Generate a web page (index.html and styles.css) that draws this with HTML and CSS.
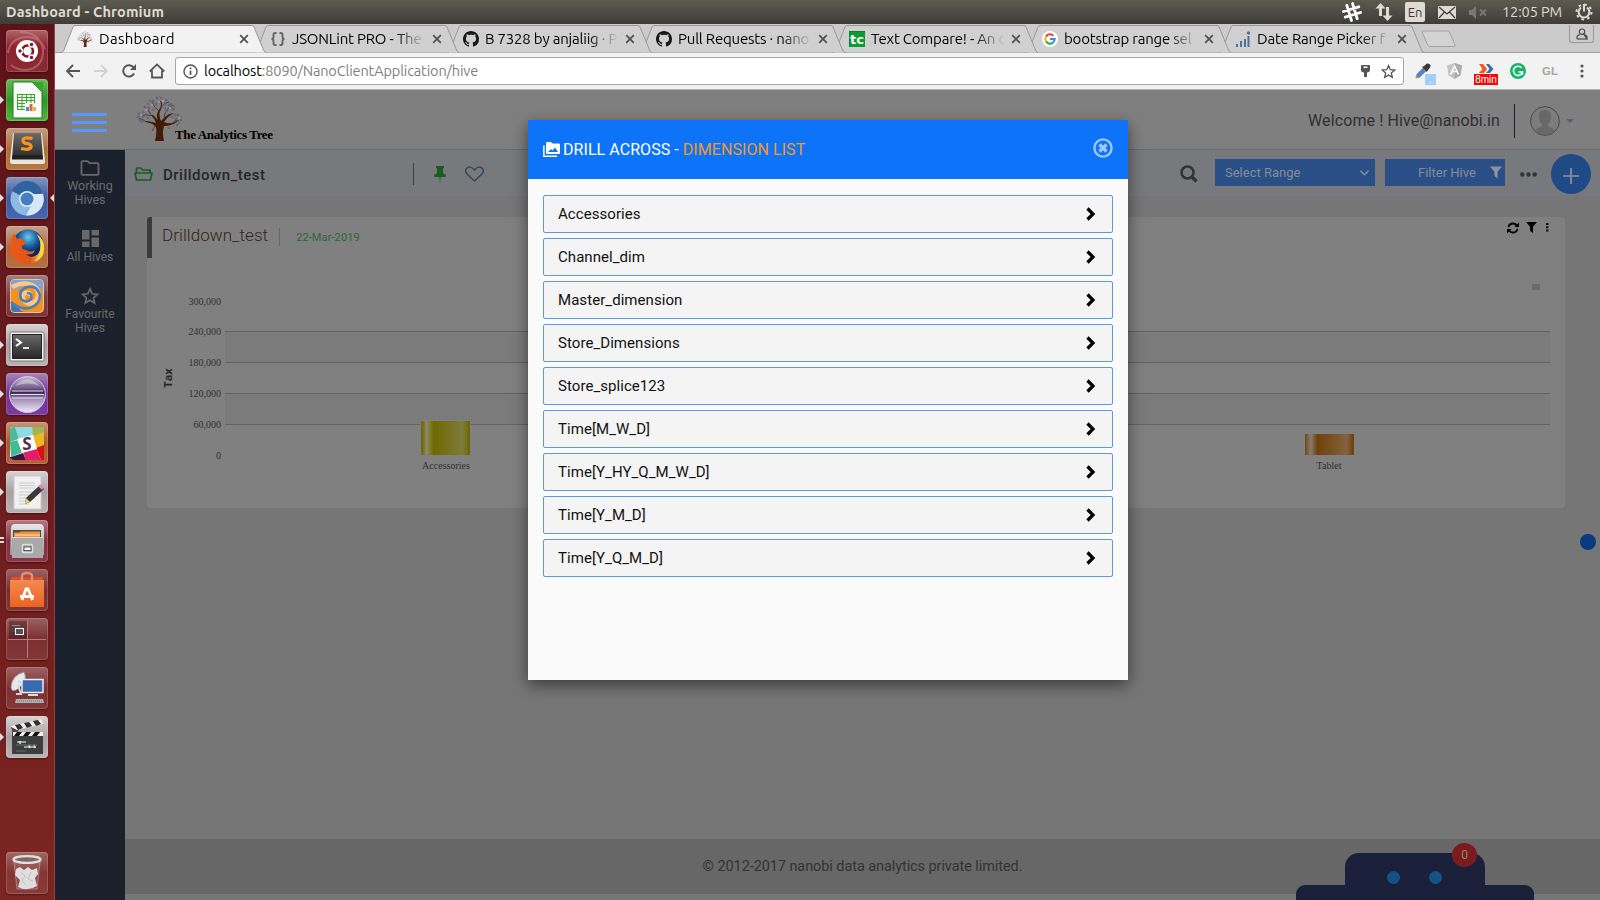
FILE: index.html
```html
<!DOCTYPE html>
<html lang="en">
<head>
<meta charset="utf-8">
<title>Dashboard</title>
<link rel="stylesheet" href="styles.css">
</head>
<body>
<svg class="defs" width="0" height="0">
  <defs>
    <linearGradient id="yellowBar"><stop offset="0" stop-color="#6c6700"/><stop offset=".05" stop-color="#77731c"/><stop offset=".11" stop-color="#8b8a70"/><stop offset=".17" stop-color="#827e35"/><stop offset=".27" stop-color="#6f6900"/><stop offset=".85" stop-color="#7f7b3c"/><stop offset="1" stop-color="#6a6500"/></linearGradient>
    <linearGradient id="orangeBar"><stop offset="0" stop-color="#70460f"/><stop offset=".05" stop-color="#7c5e3a"/><stop offset=".12" stop-color="#857b6f"/><stop offset=".25" stop-color="#6e420a"/><stop offset=".85" stop-color="#83623e"/><stop offset="1" stop-color="#693f09"/></linearGradient>
    <linearGradient id="metal" x1="0" y1="0" x2="0" y2="1"><stop offset="0" stop-color="#e8e8e8"/><stop offset="1" stop-color="#9c9c9c"/></linearGradient>
    <linearGradient id="dark" x1="0" y1="0" x2="0" y2="1"><stop offset="0" stop-color="#6a6a6a"/><stop offset="1" stop-color="#272727"/></linearGradient>
    <linearGradient id="bag" x1="0" y1="0" x2="0" y2="1"><stop offset="0" stop-color="#f08b50"/><stop offset=".5" stop-color="#f0763a"/><stop offset="1" stop-color="#e9631f"/></linearGradient>
    <radialGradient id="globe" cx=".5" cy=".25"><stop offset="0" stop-color="#6cc8ee"/><stop offset=".6" stop-color="#175f9f"/><stop offset="1" stop-color="#0b2a5c"/></radialGradient>
    <linearGradient id="fox" x1="0" y1="0" x2="1" y2="0"><stop offset="0" stop-color="#ea5a1b"/><stop offset=".6" stop-color="#e3541c"/><stop offset="1" stop-color="#fcd53a"/></linearGradient>
    <linearGradient id="ecl" x1="0" y1="0" x2="0" y2="1"><stop offset="0" stop-color="#cdbcdc"/><stop offset=".3" stop-color="#7b6592"/><stop offset=".45" stop-color="#3c2852"/><stop offset=".6" stop-color="#9c86b3"/><stop offset="1" stop-color="#f2ebf8"/></linearGradient>
    <symbol id="tab" viewBox="0 0 207 29"><path d="M0 28.5H1.5C3 28.5 3.500 27 4 26L13 3Q14 1.500 15 1.500H192Q193.500 1.500 194 3L203.500 26Q204.500 28.500 206 28.500"/></symbol>
    <symbol id="x" viewBox="0 0 10 10"><path d="M1.200 1.200L8.800 8.800M8.800 1.200L1.200 8.800" stroke="#505050" stroke-width="1.700"/></symbol>
    <symbol id="github" viewBox="0 0 16 16"><path fill="#191717" d="M8 0C3.580 0 0 3.580 0 8c0 3.540 2.290 6.530 5.470 7.590.4.070.55-.17.55-.38 0-.19-.01-.82-.01-1.490-2.010.37-2.530-.49-2.690-.94-.09-.23-.48-.94-.82-1.130-.28-.15-.68-.52-.01-.53.63-.01 1.080.58 1.230.82.72 1.210 1.870.87 2.330.66.07-.52.28-.87.51-1.070-1.780-.2-3.640-.89-3.640-3.950 0-.87.31-1.590.82-2.150-.08-.2-.36-1.020.08-2.120 0 0 .67-.21 2.200.82.64-.18 1.320-.27 2-.27s1.360.09 2 .27c1.530-1.040 2.200-.82 2.200-.82.44 1.100.16 1.920.08 2.120.51.56.82 1.270.82 2.150 0 3.070-1.870 3.750-3.650 3.950.29.25.54.73.54 1.480 0 1.070-.01 1.930-.01 2.200 0 .21.15.46.55.38A8.010 8.010 0 0 0 16 8c0-4.420-3.580-8-8-8z"/></symbol>
    <symbol id="chev" viewBox="0 0 10 14"><path d="M1.500 1.500L7 7L1.500 12.500" fill="none" stroke="#000" stroke-width="3.200"/></symbol>
    <symbol id="funnel" viewBox="0 0 12 12"><path d="M0 0H12L7.600 5.200V12L4.400 9.500V5.200Z"/></symbol>
    <symbol id="tree" viewBox="0 0 46 46">
      <path fill="#3f1b08" d="M19 46Q21 37 20 32Q17 28 9 27L10 26Q17 27 20 28Q19 24 15 20L17 20Q21 24 22 25Q19 20 24 13Q26 10 24 6L25 6Q27 10 25 14Q22 19 25 26Q28 22 33 19L38 18Q32 21 28 27Q34 30 41 26L41 27Q35 31 28 31Q26 38 28 46Z"/>
      <g fill="none" stroke="#56321f" stroke-width=".9"><path d="M15 21Q10 18 6 21M23 16Q18 12 16 7M28 22Q30 13 37 10M25 12Q28 8 33 7M16 21L12 15M9 26L3 23M36 29Q39 24 43 26M19 31L16 36"/></g>
      <g fill="#5f5a86" fill-opacity=".8"><circle cx="3" cy="19" r="1.500"/><circle cx="9" cy="12" r="1.500"/><circle cx="17" cy="6" r="1.600"/><circle cx="30" cy="5" r="1.500"/><circle cx="42" cy="20" r="1.500"/><circle cx="45" cy="25" r="1.200"/><circle cx="4" cy="25" r="1.500"/><circle cx="37" cy="14" r="1.600"/><circle cx="13" cy="13" r="1.500"/><circle cx="21" cy="3" r="1.500"/><circle cx="33" cy="10" r="1.300"/><circle cx="10" cy="20" r="1.400"/><circle cx="40" cy="24" r="1.500"/></g>
      <g fill="#8a5668" fill-opacity=".8"><circle cx="20" cy="9" r="1.600"/><circle cx="35" cy="9" r="1.500"/><circle cx="7" cy="17" r="1.400"/><circle cx="39" cy="20" r="1.500"/><circle cx="25" cy="3" r="1.400"/><circle cx="7" cy="22" r="1.400"/><circle cx="33" cy="33" r="1.200"/><circle cx="12" cy="9" r="1.300"/><circle cx="29" cy="13" r="1.300"/><circle cx="17" cy="15" r="1.300"/><circle cx="43" cy="28" r="1.200"/><circle cx="17" cy="34" r="1.200"/></g>
      <g fill="#477377" fill-opacity=".8"><circle cx="14" cy="6" r="1.400"/><circle cx="29" cy="9" r="1.500"/><circle cx="2" cy="22" r="1.500"/><circle cx="41" cy="30" r="1.300"/><circle cx="19" cy="13" r="1.300"/><circle cx="38" cy="11" r="1.300"/><circle cx="31" cy="16" r="1.300"/><circle cx="12" cy="23" r="1.300"/><circle cx="36" cy="22" r="1.400"/><circle cx="6" cy="27" r="1.200"/></g>
      <g fill="#a39aa2" fill-opacity=".8"><circle cx="16" cy="10" r="1.300"/><circle cx="27" cy="6" r="1.300"/><circle cx="34" cy="13" r="1.200"/><circle cx="5" cy="20" r="1.200"/><circle cx="43" cy="23" r="1.200"/><circle cx="23" cy="7" r="1.200"/><circle cx="10" cy="15" r="1.200"/></g>
    </symbol>
  </defs>
</svg>

<div class="desktop">
  <header class="panel">
    <span class="panel-title">Dashboard - Chromium</span>
    <div class="indicators">
      <svg width="20" height="20" viewBox="0 0 20 20"><g transform="rotate(-17 10 10)" stroke="#fff" stroke-width="2.800" stroke-linecap="round"><path d="M7 2V18M13 2V18M2 7H18M2 13H18"/></g></svg>
      <svg width="18" height="18" viewBox="0 0 18 18" fill="#dfdbd2"><path d="M5.500 0L10.500 5.500H7V13H4V5.500H.5ZM12.500 18L7.500 12.500H11V4H14V12.500H17.500Z"/></svg>
      <span class="kbd">En</span>
      <svg width="18" height="13" viewBox="0 0 18 13"><rect width="18" height="13" rx="1" fill="#dfdbd2"/><path d="M1 1L9 8L17 1M1 12L6.500 6M17 12L11.500 6" fill="none" stroke="#3c3b37" stroke-width="1.200"/></svg>
      <svg width="18" height="13" viewBox="0 0 18 13"><path d="M0 4H3L7 0V13L3 9H0Z" fill="#7a7871"/><path d="M11 3.500L17 9.500M17 3.500L11 9.500" stroke="#7a7871" stroke-width="1.800"/></svg>
      <span class="clock">12:05 PM</span>
      <svg width="18" height="18" viewBox="0 0 18 18" fill="none" stroke="#dfdbd2"><circle cx="9" cy="9" r="7.500" stroke-width="2" stroke-dasharray="2.500 3.390"/><path d="M6 4.600A5.400 5.400 0 1 0 12 4.600" stroke-width="2"/><path d="M9 1V8.500" stroke-width="2"/></svg>
    </div>
  </header>

  <div class="below">
    <nav class="launcher">
      <div class="app ubuntu"><svg viewBox="0 0 42 42"><path d="M2 23Q4 8 21 7Q34 7 39 19M5 35Q13 42 25 39Q38 35 37 18M14 2Q34 2 37 20" fill="none" stroke="#d59297" stroke-opacity=".45" stroke-width="2"/><circle cx="21" cy="21" r="11" fill="#fff"/><circle cx="21.500" cy="21" r="5.500" fill="none" stroke="#7a1a24" stroke-width="2.600"/><g stroke="#fff" stroke-width="1.500"><circle cx="14" cy="21" r="2.500" fill="#7a1a24"/><circle cx="25.500" cy="14.500" r="2.500" fill="#7a1a24"/><circle cx="25.500" cy="27.500" r="2.500" fill="#7a1a24"/></g></svg></div>
      <div class="app calc run"><svg viewBox="0 0 42 42"><path d="M7 3H26L36 13V39H7Z" fill="#f8fbf7" stroke="#1c7a17"/><path d="M26 3H37V14Z" fill="#36a72a"/><g fill="none" stroke="#3aa62f" stroke-width="1"><rect x="11.500" y="15.500" width="17" height="15"/><path d="M11 18.500H29M11 21.500H29M11 24.500H29M11 27.500H29M16 15V31M20.500 15V31M25 15V31"/></g><path fill="#fff" d="M19 24H31V32H19Z"/><path fill="#4a90d0" d="M20 28H23V32H20Z"/><path fill="#e4692d" d="M23.500 25H26.500V32H23.500Z"/><path fill="#e9b34c" d="M27 28H30V32H27Z"/></svg></div>
      <div class="app sublime run"><svg viewBox="0 0 42 42"><path d="M7 5H36L39 33Q39 36 37 36H6Q4 36 4 33Z" fill="#e9e6e1"/><path d="M8 5H35L37 31H6Z" fill="url(#dark)"/><path d="M7 27H36L37 31.500H6Z" fill="#202020"/><path d="M26.500 10.500Q17 8.500 17 12.500Q17 15 21.500 15.700Q26 16.500 25 19.500Q23 22.500 15 20.500" fill="none" stroke="#f59323" stroke-width="3.200"/></svg></div>
      <div class="app chromium run focus"><svg viewBox="0 0 42 42"><circle cx="21" cy="22" r="16.500" fill="#8db9e2"/><path d="M21 22L6 14A16.500 16.500 0 0 1 37 16Z" fill="#2e639f"/><path d="M26 17H37A16.500 16.500 0 0 1 20 38.500L27 25Z" fill="#d6e7f6"/><circle cx="21" cy="22" r="8" fill="#e2effa"/><circle cx="21" cy="22" r="6.500" fill="#437fc1"/></svg></div>
      <div class="app firefox run"><svg viewBox="0 0 42 42"><circle cx="22" cy="19" r="15.500" fill="url(#globe)"/><path d="M8 7L11 13Q15 11 18 14L20 17L16 20Q15 23 20 24Q25 27 29 24Q27 30 20 28Q25 34 32 28Q36 23 34 13L31 9Q39 13 38 24Q36 35 25 38Q11 40 5 28Q2 18 8 7Z" fill="url(#fox)"/><path d="M31 8Q41 16 37 29Q33 35 29 35Q36 27 34 15Z" fill="#fbd446"/></svg></div>
      <div class="app swirl"><svg viewBox="0 0 42 42"><rect x="4.500" y="4.500" width="33" height="33" rx="4" fill="#f7921e" stroke="#eac99c"/><path d="M8 5H34Q37 5 37 9V20Q35 10 25 9Q14 9 12 18Q13 11 5 15V8Q5 5 8 5Z" fill="#79a5d8"/><path d="M5 27Q13 31 14 35Q16 37 22 37H8Q5 37 5 33Z" fill="#3f76b5"/><g fill="none"><path d="M6 12Q17 6 26 10Q35 15 31 24Q27 31 19 27Q14 22 19 18Q24 16 24 21" stroke="#fbc98b" stroke-width="4.500"/><path d="M5 27Q14 35 24 33Q34 30 34 20Q31 10 21 12Q12 15 15 24Q20 29 25 24Q27 18 21 18" stroke="#4c80bd" stroke-width="2.600"/></g></svg></div>
      <div class="app term run"><svg viewBox="0 0 42 42"><rect x="4" y="8" width="34" height="29" rx="1.500" fill="#f2f2f2" stroke="#777"/><rect x="6.500" y="10.500" width="29" height="24" fill="url(#dark)" stroke="#222"/><path d="M10 15L15 18.500L10 22" fill="none" stroke="#fff" stroke-width="2"/><path d="M17 24H23" stroke="#fff" stroke-width="1.700"/></svg></div>
      <div class="app eclipse run"><svg viewBox="0 0 42 42"><circle cx="21.500" cy="21.500" r="18" fill="url(#ecl)" stroke="#d6c6e2"/><path d="M6 18H37M5 21.500H38M6 25H37" stroke="#e6dcee" stroke-width="1.100"/><path d="M9 13Q21 0 34 13Q22 8 9 13Z" fill="#fff" opacity=".35"/></svg></div>
      <div class="app slack run"><svg viewBox="0 0 42 42"><rect x="4" y="5" width="34" height="33" rx="3" fill="#fff"/><path d="M4 8Q4 5 8 5H9L16 16L4 20Z" fill="#4dbb9b"/><path d="M9 5H26L28 13L13 18Z" fill="#8edbe4"/><path d="M26 5H38V12L27 14Z" fill="#a3b452"/><path d="M27 14L38 10V24L30 27Z" fill="#edb625"/><path d="M4 20L12 18L17 30L5 35Z" fill="#42bc96"/><path d="M17 30L30 26L35 38H20Z" fill="#e41c69"/><path d="M30 26L38 23V38H35Z" fill="#d51017"/><path d="M5 35L17 31L20 38H8Q4 38 4 35Z" fill="#421047"/><path d="M11 17L27 13L31 27L16 31Z" fill="#fff"/><text x="21" y="28" class="slack-s">S</text></svg></div>
      <div class="app edit run"><svg viewBox="0 0 42 42"><path d="M8 5H35V38H8Z" fill="#f1f1f1" stroke="#ccc"/><path d="M13 12H29M13 14.500H29M13 17H29M13 21H29M13 24H25M13 27H29M13 30H25M13 33H23" stroke="#c1c1c1" stroke-width=".8"/><path d="M34 14L38 18L24 31L19 33L20 27Z" fill="#393939"/><path d="M32 15L35 13L38 16L36 19Z" fill="#df8bc4"/><path d="M20 27L24 31L19 33Z" fill="#e5d067"/></svg></div>
      <div class="app files"><svg viewBox="0 0 42 42"><path d="M5 9Q5 4 9 4H34Q38 4 38 9V35H4Z" fill="url(#metal)"/><path d="M7 10H35V20H7Z" fill="#504b46"/><path d="M8 12.500H13L15 11.500H34V18H8Z" fill="#f2913d"/><path d="M9 15H34" stroke="#ffe3be"/><path d="M6 17H37V38H6Z" fill="#a9a9a9"/><path d="M6 17.500H37" stroke="#d8d8d8"/><rect x="16.500" y="24.500" width="10" height="8" rx="1" fill="none" stroke="#ddd" stroke-width="1.500"/><rect x="18" y="27" width="7" height="3.500" fill="#fff" stroke="#555"/></svg><i></i><b></b></div>
      <div class="app store"><svg viewBox="0 0 42 42"><path d="M5 8H37V13H5Z" fill="#d9512b"/><path d="M4 11H38V38H4Z" fill="url(#bag)"/><path d="M16 13V7Q16 4 21 4Q26 4 26 7V13" fill="none" stroke="#f0866a" stroke-width="2.500"/><path d="M16 31L20 20H22L26.500 31M14 27.500H28" fill="none" stroke="#fff" stroke-width="2.800"/></svg></div>
      <div class="app spaces"><svg viewBox="0 0 42 42"><path d="M3 3H21V21H3Z" fill="#351016" opacity=".4"/><path d="M21.500 2V40M2 21.500H40" stroke="#b77d81"/><path d="M6 7H14V9H6Z" fill="#97858a"/><rect x="6" y="8" width="9" height="6" fill="#574247"/><rect x="9.500" y="10.500" width="8" height="6" fill="#604b50" stroke="#fff"/></svg></div>
      <div class="app remote"><svg viewBox="0 0 42 42"><path d="M5 20Q6 8 18 5Q22 12 14 20Q9 25 6 23Z" fill="#e6e9e8" stroke="#99a"/><path d="M12 18L15 27H10M12 14L18 18" fill="none" stroke="#d3d3d3" stroke-width="2"/><rect x="16" y="12.500" width="21" height="13" fill="#376bb2" stroke="#e8edf2" stroke-width="1.500"/><path d="M22 28H32" stroke="#ddd" stroke-width="2"/><path d="M10 32H37L38 36H9Z" fill="#aeb6b3"/><path d="M11 34H36" stroke="#666" stroke-dasharray="1 1"/></svg></div>
      <div class="app clapper run"><svg viewBox="0 0 42 42"><path d="M5 10L36 3L37 8L7 15Z" fill="#eee"/><path d="M9 9L14 8L17 12L12 14ZM18 7L23 6L26 10L21 12ZM27 5L32 4L35 8L30 10Z" fill="#2f2f2f"/><path d="M5 11L13 15L7 18Z" fill="#444"/><path d="M6 16H37V38H6Z" fill="#3d3f3f"/><path d="M7 16H37V20H7Z" fill="#f1f1f1"/><path d="M11 16H16L13 20H8ZM20 16H25L22 20H17ZM29 16H34L31 20H26Z" fill="#111"/><path d="M11 26H20M14 25V28M18 31H30M23 29L24 32M28 29L29 32" stroke="#fff" stroke-width="1.200"/><path d="M10 35H20M10 29H31" stroke="#777" stroke-width=".8"/></svg></div>
      <div class="app trash"><svg viewBox="0 0 42 42"><ellipse cx="21" cy="7.500" rx="13.500" ry="3.300" fill="#856563" stroke="#dbe0dc" stroke-width="2.300"/><path d="M8 10L11 37H31L34 10" fill="#fff" fill-opacity=".1" stroke="#d8c9c8" stroke-opacity=".45"/><path d="M10 17L14 15L18 18L22 15L26 18L31 16L32 22L29 26L31 34Q21 40 12 35L14 28L9 23Z" fill="#dedede"/><path d="M15 20L19 24L16 29L20 33M25 20L22 27L27 29" fill="none" stroke="#c0c0c0"/></svg></div>
    </nav>

    <main class="browser">
      <div class="tabs">
        <div class="tab active"><svg class="shape"><use href="#tab"/></svg><svg class="fav bright" viewBox="0 0 46 46"><use href="#tree"/></svg><span class="label">Dashboard</span><svg class="close"><use href="#x"/></svg></div>
        <div class="tab"><svg class="shape"><use href="#tab"/></svg><svg class="fav" viewBox="0 0 16 16" fill="none" stroke="#666" stroke-width="1.900"><path d="M6.500 2H5Q3.500 2 3.500 4V6Q3.500 8 1.500 8Q3.500 8 3.500 10V12Q3.500 14 5 14H6.500M9.500 2H11Q12.500 2 12.500 4V6Q12.500 8 14.500 8Q12.500 8 12.500 10V12Q12.500 14 11 14H9.500"/></svg><span class="label">JSONLint PRO - The</span><svg class="close"><use href="#x"/></svg></div>
        <div class="tab"><svg class="shape"><use href="#tab"/></svg><svg class="fav"><use href="#github"/></svg><span class="label">B 7328 by anjaliig · P</span><svg class="close"><use href="#x"/></svg></div>
        <div class="tab"><svg class="shape"><use href="#tab"/></svg><svg class="fav"><use href="#github"/></svg><span class="label">Pull Requests · nano</span><svg class="close"><use href="#x"/></svg></div>
        <div class="tab"><svg class="shape"><use href="#tab"/></svg><svg class="fav" viewBox="0 0 16 16"><rect width="16" height="16" fill="#0b9c35"/><path d="M0 16V0H16" fill="none" stroke="#087127"/><text x="8" y="13" class="tc">tc</text></svg><span class="label">Text Compare! - An o</span><svg class="close"><use href="#x"/></svg></div>
        <div class="tab"><svg class="shape"><use href="#tab"/></svg><svg class="fav" viewBox="0 0 16 16"><circle cx="8" cy="8" r="8" fill="#fff"/><g fill="none" stroke-width="2.100"><path d="M4 5.600A4.700 4.700 0 0 1 11.400 4.700" stroke="#ea4335"/><path d="M4 5.600A4.700 4.700 0 0 0 4 10.400" stroke="#fbbc05"/><path d="M4 10.400A4.700 4.700 0 0 0 11 11.600" stroke="#34a853"/><path d="M8 8H12.700A4.700 4.700 0 0 1 11 11.600" stroke="#4285f4"/></g></svg><span class="label">bootstrap range sel</span><svg class="close"><use href="#x"/></svg></div>
        <div class="tab"><svg class="shape"><use href="#tab"/></svg><svg class="fav" viewBox="0 0 16 16" fill="#48749c"><path d="M1 13H3V16H1ZM5 10H7V16H5ZM9 8H11V16H9ZM12.500 5H14.500V16H12.500Z"/><circle cx="13.500" cy="2" r="1.700"/></svg><span class="label">Date Range Picker f</span><svg class="close"><use href="#x"/></svg></div>
        <svg class="newtab" width="36" height="18" viewBox="0 0 36 18"><path d="M1 2Q1 1 2.500 1H26Q28 1 28.500 2L34 15Q34.500 16.500 33 16.500H9Q7.500 16.500 7 15.500Z" fill="#d3d3d3" stroke="#a2a2a2"/></svg>
        <div class="profile"><svg width="12" height="12" viewBox="0 0 12 12" fill="none" stroke="#4c4c4c" stroke-width="1.200"><circle cx="6" cy="3.700" r="2.700"/><path d="M1 11V9Q1 7.500 4 6.500M8 6.500Q11 7.500 11 9V11Z"/><path d="M1 11H11"/></svg></div>
      </div>
      <div class="toolbar">
        <svg width="14" height="14" viewBox="0 0 14 14" fill="none" stroke="#555" stroke-width="1.900"><path d="M14 7H1.500M7 1L1 7L7 13"/></svg>
        <svg width="14" height="14" viewBox="0 0 14 14" fill="none" stroke="#d2d2d2" stroke-width="1.900"><path d="M0 7H12.500M7 1L13 7L7 13"/></svg>
        <svg width="14" height="14" viewBox="0 0 14 14"><path d="M12 9.500A5.700 5.700 0 1 1 11.500 3.500" fill="none" stroke="#555" stroke-width="2"/><path d="M14 0V6H8Z" fill="#555"/></svg>
        <svg class="home" width="16" height="16" viewBox="0 0 16 16" fill="none" stroke="#555" stroke-width="1.800"><path d="M.8 8.500L8 1.400L15.200 8.500M3 7.500V14.500H13V7.500"/></svg>
        <div class="omnibox">
          <svg width="15" height="15" viewBox="0 0 15 15"><circle cx="7.500" cy="7.500" r="6.500" fill="none" stroke="#555" stroke-width="1.400"/><path d="M7.500 6.500V11M7.500 3.600V5.200" stroke="#555" stroke-width="1.700"/></svg>
          <span class="url">localhost<span>:8090/NanoClientApplication/hive</span></span>
          <svg class="key" width="9" height="13" viewBox="0 0 9 13" fill="#555"><path fill-rule="evenodd" d="M0 1Q0 0 1 0H8Q9 0 9 1V5Q9 7 6 7.500V12H3V7.500Q0 7 0 5ZM2.500 1.500V3H6.500V1.500Z"/></svg>
          <svg width="15" height="15" viewBox="0 0 24 24"><path d="M12 2.500L14.800 9L22 9.600L16.500 14.300L18.200 21.300L12 17.500L5.800 21.300L7.500 14.300L2 9.600L9.200 9Z" fill="none" stroke="#505050" stroke-width="2"/></svg>
        </div>
        <div class="exts">
          <span class="ext"><svg width="16" height="16" viewBox="0 0 16 16"><path d="M1 15L2 11L8 5L11 8L5 14Z" fill="#4a88c9" stroke="#999"/><path d="M7 4L9 3L12 .5Q14 0 15.500 2Q16 4 13 7L12 9Z" fill="#3a3a3a"/></svg><i class="dot-badge">.</i></span>
          <span class="ext"><svg width="15" height="16" viewBox="0 0 15 16"><path d="M7.500 0L15 2.500L13.500 12.500L7.500 16L1.500 12.500L0 2.500Z" fill="#c3c3c3"/><path d="M7.500 0L15 2.500L13.500 12.500L7.500 16Z" fill="#acacac"/><path d="M3.500 11.500L7.500 3L11.500 11.500M5.500 8.500H9.500" fill="none" stroke="#fff" stroke-width="1.500"/></svg></span>
          <span class="ext"><svg width="16" height="16" viewBox="0 0 16 16"><path d="M1 1H5L9 6L6 10H1L4.500 6Z" fill="#fa5419"/><path d="M8 1H11L15.500 6L12 10H8L11.500 6Z" fill="#3e69a9"/></svg><i class="min-badge">8min</i></span>
          <span class="ext"><svg width="16" height="16" viewBox="0 0 16 16"><circle cx="8" cy="8" r="8" fill="#19b36b"/><path d="M11.500 4.800A4.600 4.600 0 1 0 12.500 9H8.500M12.500 9V12" fill="none" stroke="#fff" stroke-width="1.500"/></svg></span>
          <span class="ext gl">GL</span>
          <span class="ext kebab"><svg width="4" height="14" viewBox="0 0 4 14" fill="#555"><circle cx="2" cy="2" r="1.600"/><circle cx="2" cy="7" r="1.600"/><circle cx="2" cy="12" r="1.600"/></svg></span>
        </div>
      </div>

      <div class="page">
        <div class="site-head">
          <div class="burger"><i></i><i></i><i></i></div>
          <div class="logo"><svg width="46" height="46"><use href="#tree"/></svg><span>The Analytics Tree</span></div>
          <div class="user"><span class="welcome">Welcome ! Hive@nanobi.in</span><i class="bar"></i><svg class="avatar" width="30" height="30" viewBox="0 0 30 30"><circle cx="15" cy="15" r="14.400" fill="#7c7c7c" stroke="#494949"/><path d="M9 10Q9 4 15 4Q21 4 21 10Q21 15 18 18Q18 21 22 22Q24 23 24.500 25Q20 29 15 29Q10 29 5.500 25Q6 23 8 22Q12 21 12 18Q9 15 9 10Z" fill="#686868"/></svg><svg width="8" height="4" viewBox="0 0 8 4"><path d="M0 0H8L4 4Z" fill="#4c6376"/></svg></div>
        </div>
        <div class="site-body">
          <aside class="side">
            <a class="working"><svg width="20" height="16" viewBox="0 0 20 16"><path d="M1.500 14V2Q1.500 1.200 2.500 1.200H7.500L9.500 3.200H17.500Q18.500 3.200 18.500 4.200V14Q18.500 14.800 17.500 14.800H2.500Q1.500 14.800 1.500 14Z" fill="none" stroke="#686868" stroke-width="1.800"/></svg>Working<br>Hives</a>
            <a class="all"><svg width="17" height="17" viewBox="0 0 17 17" fill="#686868"><path d="M0 0H7.500V9.500H0ZM9.500 0H17V5.500H9.500ZM0 11.500H7.500V17H0ZM9.500 7.500H17V17H9.500Z"/></svg>All Hives</a>
            <a class="fave"><svg width="20" height="20" viewBox="0 0 24 24"><path d="M12 3.500L14.600 9.400L21 10L16.200 14.200L17.600 20.500L12 17.200L6.400 20.500L7.800 14.200L3 10L9.400 9.400Z" fill="none" stroke="#686868" stroke-width="2"/></svg>Favourite<br>Hives</a>
          </aside>
          <section class="content">
            <div class="hivebar">
              <svg width="19" height="14" viewBox="0 0 19 14" fill="none" stroke="#195c22" stroke-width="1.700" stroke-linejoin="round"><path d="M2.500 6V1H7L8.500 3H16V6M2.500 6H18L16.500 13H2.500L1 6Z"/></svg>
              <span class="hive-name">Drilldown_test</span>
              <i class="sep"></i>
              <svg class="pin" width="12" height="17" viewBox="0 0 12 17" fill="#195c22"><path d="M2 0H10V2L9 2.500V7Q12 8 12 11H6.700L6 17L5.300 11H0Q0 8 3 7V2.500L2 2Z"/></svg>
              <svg class="heart" width="19" height="16" viewBox="0 0 19 16"><path d="M9.500 15L2 8Q-.5 5 1.500 2.500Q5-1 9.500 4Q14-1 17.500 2.500Q19.500 5 17 8Z" fill="none" stroke="#35485a" stroke-width="1.500"/></svg>
              <div class="tools">
                <svg width="18" height="18" viewBox="0 0 18 18" fill="none" stroke="#333"><circle cx="7.500" cy="7.500" r="6" stroke-width="2.500"/><path d="M12 12L16.500 16.500" stroke-width="3.200"/></svg>
                <div class="select">Select Range<svg width="9" height="6" viewBox="0 0 9 6"><path d="M.5 .8L4.500 4.800L8.500 .8" fill="none" stroke="#8b939c" stroke-width="1.300"/></svg></div>
                <div class="filter">Filter Hive<svg width="12" height="13" fill="#8b939c"><use href="#funnel"/></svg></div>
                <svg width="17" height="5" viewBox="0 0 17 5" fill="#333"><circle cx="2.300" cy="2.500" r="2.200"/><circle cx="8.500" cy="2.500" r="2.200"/><circle cx="14.700" cy="2.500" r="2.200"/></svg>
                <div class="plus"><svg width="16" height="16" viewBox="0 0 16 16"><path d="M8 0V16M0 8H16" stroke="#8b939c" stroke-width="1.700"/></svg></div>
              </div>
            </div>
            <article class="card">
              <div class="card-head"><h2>Drilldown_test</h2><i class="sep"></i><time>22-Mar-2019</time>
                <div class="card-tools"><svg width="12" height="12" viewBox="0 0 12 12"><path d="M1.500 5Q2.500 1.500 6 1.500Q8.500 1.500 10 3.500M10.500 7Q9.500 10.500 6 10.500Q3.500 10.500 2 8.500" fill="none" stroke="#000" stroke-width="1.800"/><path d="M12 .5V5H7.500ZM0 11.500V7H4.500Z"/></svg><svg width="11" height="11"><use href="#funnel"/></svg><svg class="more" width="3" height="9" viewBox="0 0 3 9"><path d="M0 0H2.500V2H0ZM0 3.300H2.500V5.300H0ZM0 6.600H2.500V8.600H0Z" fill="#111"/></svg></div>
              </div>
              <svg class="chart" width="1418" height="250" viewBox="147 258 1418 250">
                <path d="M225 331H1550V362H225ZM225 393H1550V424H225Z" fill="#7b7b7b"/>
                <path d="M225 331.500H1550M225 362.500H1550M225 393.500H1550M225 424.500H1550" stroke="#636363"/>
                <path d="M1532 284H1540V290H1532Z" fill="#696969"/>
                <path d="M420 420H471V456H420Z" fill="#808080"/>
                <path d="M421 421H470V455H421Z" fill="url(#yellowBar)"/><path d="M1305 434H1354V455H1305Z" fill="url(#orangeBar)"/>
                <g class="ylab"><text x="221" y="305">300,000</text><text x="221" y="335">240,000</text><text x="221" y="366">180,000</text><text x="221" y="397">120,000</text><text x="221" y="428">60,000</text><text x="221" y="459">0</text></g>
                <g class="xlab"><text x="446" y="469">Accessories</text><text x="1329" y="469">Tablet</text></g>
                <text class="axis" transform="translate(172 378) rotate(-90)">Tax</text>
              </svg>
            </article>
            <footer>© 2012-2017 nanobi data analytics private limited.</footer>
          </section>
        </div>
        <i class="side-dot"></i>
        <div class="bot"><div class="head"><i></i><i></i><b>0</b></div><div class="torso"></div></div>
      </div>
    </main>
  </div>

  <div class="modal">
    <div class="modal-head">
      <svg width="18" height="15" viewBox="0 0 18 15"><path d="M.9 3.500V14.200H14" fill="none" stroke="#fff" stroke-width="1.500"/><path fill="#fff" fill-rule="evenodd" d="M3 1Q3 0 4 0H8L9.500 1.500H16Q17 1.500 17 2.500V11Q17 12 16 12H4Q3 12 3 11ZM5 10H15L12 5.500L9.500 8.500L8 7Z"/></svg>
      <span>DRILL ACROSS - <em>DIMENSION LIST</em></span>
      <svg class="dismiss" width="20" height="20" viewBox="0 0 20 20" fill="none" stroke="#9fc7fc"><circle cx="10" cy="10" r="8.600" stroke-width="2.400"/><path d="M6.500 6.500L13.500 13.500M13.500 6.500L6.500 13.500" stroke-width="3.400"/></svg>
    </div>
    <ul>
      <li>Accessories<svg><use href="#chev"/></svg></li>
      <li>Channel_dim<svg><use href="#chev"/></svg></li>
      <li>Master_dimension<svg><use href="#chev"/></svg></li>
      <li>Store_Dimensions<svg><use href="#chev"/></svg></li>
      <li>Store_splice123<svg><use href="#chev"/></svg></li>
      <li>Time[M_W_D]<svg><use href="#chev"/></svg></li>
      <li>Time[Y_HY_Q_M_W_D]<svg><use href="#chev"/></svg></li>
      <li>Time[Y_M_D]<svg><use href="#chev"/></svg></li>
      <li>Time[Y_Q_M_D]<svg><use href="#chev"/></svg></li>
    </ul>
  </div>
</div>
</body>
</html>
```
FILE: styles.css
```css
* { box-sizing: border-box; }
body { margin: 0; font-family: Roboto, sans-serif; overflow: hidden; }
svg { display: block; flex: none; }
.defs { position: absolute; }
.desktop { position: relative; width: 1600px; height: 900px; display: flex; flex-direction: column; overflow: hidden; }

/* top panel */
.panel { height: 24px; flex: none; display: flex; align-items: center; justify-content: space-between; padding: 0 7px 0 6px; background: linear-gradient(#5d5b50, #3d3c38); color: #dfdbd2; font-family: Ubuntu, "Noto Sans", sans-serif; }
.panel-title { font-weight: 700; font-size: 14.500px; letter-spacing: .15px; line-height: 24px; }
.indicators { display: flex; align-items: center; }
.indicators > * { margin-right: 12px; }
.indicators > :first-child { margin-right: 13px; }
.indicators > :nth-child(3), .indicators > :nth-child(4) { margin-right: 13px; }
.indicators > :nth-child(5) { margin-right: 15px; }
.indicators > :nth-child(6) { margin-right: 13px; }
.indicators > :last-child { margin-right: 0; }
.kbd { width: 20px; height: 20px; border-radius: 2px; background: #dfdbd2; color: #3c3b37; font-size: 13px; line-height: 20px; text-align: center; }
.clock { width: 60px; font-size: 14.500px; line-height: 22px; letter-spacing: -.1px; white-space: nowrap; }

/* launcher */
.below { flex: 1; display: flex; min-height: 0; }
.launcher { width: 55px; flex: none; display: flex; flex-direction: column; gap: 7px; padding: 6px 0 6px 6px; background: linear-gradient(#5d1218, #7c2522); border-right: 1px solid #974047; }
.app { position: relative; width: 42px; height: 42px; flex: none; border-radius: 4px; box-shadow: inset 0 0 0 1px rgba(255,255,255,.17), 0 1px 2px rgba(0,0,0,.4); background: linear-gradient(rgba(255,255,255,.3), rgba(255,255,255,.07) 50%, rgba(255,255,255,.1)); }
.app svg { width: 42px; height: 42px; }
.ubuntu { background: linear-gradient(#b06469, #8b2430 40%, #8a2a32); }
.calc { background: linear-gradient(#6db75d, #2f9826 50%, #52b443); }
.sublime { background: linear-gradient(#c29e84, #ad6c36 50%, #b47b42); }
.chromium { background: linear-gradient(#8496bd, #3d5a9e 50%, #4567b0); }
.firefox { background: linear-gradient(#c8a390, #b06a3e 50%, #b3703f); }
.swirl { background: linear-gradient(#a48184, #803b43 50%, #7c353b); }
.term, .edit, .clapper { background: linear-gradient(#d8d2d3, #aaa0a2 50%, #bbb2b3); }
.eclipse { background: linear-gradient(#a684b7, #733298 50%, #7c3ba1); }
.slack { background: linear-gradient(#c79675, #ac572c 50%, #b5623b); }
.files { background: linear-gradient(#b77b85, #852f3f 50%, #8e3445); }
.trash { margin-top: auto; }
.run::before { content: ""; position: absolute; left: -6px; top: 17px; border: 4px solid transparent; border-left-color: #ddd; border-right: 0; }
.focus::after { content: ""; position: absolute; right: -6px; top: 17px; border: 4px solid transparent; border-right-color: #ddd; border-left: 0; }
.files i, .files b { position: absolute; left: -6px; top: 17px; width: 4px; height: 2px; background: #ddd; }
.files b { top: 21px; }
.slack-s { font: 700 17px "Open Sans", sans-serif; fill: #512e52; text-anchor: middle; }

/* browser chrome */
.browser { flex: 1; display: flex; flex-direction: column; min-width: 0; }
.tabs { height: 29px; flex: none; display: flex; padding-left: 5px; background: #cbcbcb; border-bottom: 1px solid #a0a0a0; position: relative; font-family: Ubuntu, "Noto Sans", sans-serif; }
.tab { position: relative; width: 193px; height: 29px; flex: none; display: flex; align-items: center; padding: 0 17px; z-index: 6; }
.tab:nth-child(2) { z-index: 5; }
.tab:nth-child(3) { z-index: 4; }
.tab:nth-child(4) { z-index: 3; }
.tab:nth-child(5) { z-index: 2; }
.tab:nth-child(6) { z-index: 1; }
.tab:nth-child(7) { z-index: 0; }
.shape { position: absolute; left: 0; top: 0; width: 207px; height: 29px; z-index: -1; fill: #d0d0d0; stroke: #999; }
.active .shape { fill: #f2f2f2; }
.fav { width: 16px; height: 16px; }
.bright { filter: brightness(1.5); }
.label { margin-left: 6px; width: 136px; flex: none; font-size: 15px; line-height: 28px; letter-spacing: -.2px; color: #000; white-space: nowrap; -webkit-mask-image: linear-gradient(90deg, #000 78%, transparent 99%); mask-image: linear-gradient(90deg, #000 76%, transparent 98%); }
.active .label { letter-spacing: .3px; }
.close { width: 10px; height: 10px; margin-left: 4px; }
.tc { font: 700 13px "DejaVu Sans", sans-serif; fill: #fff; text-anchor: middle; }
.newtab { margin: 6px 0 0 10px; }
.profile { position: absolute; right: 6px; top: 1px; width: 25px; height: 18px; border: 1px solid #999; border-top: 0; border-radius: 0 0 3px 3px; display: flex; justify-content: center; align-items: center; }
.toolbar { height: 37px; flex: none; display: flex; align-items: center; gap: 14px; padding: 0 16px 0 11px; background: #f2f2f2; border-bottom: 1px solid #b5b5b5; }
.home { margin-left: -1px; }
.omnibox { width: 1229px; height: 28px; margin-left: -4px; flex: none; display: flex; align-items: center; gap: 6px; padding: 0 7px; background: #fff; border: 1px solid #a5a5a5; border-radius: 3px; }
.url { font: 14.500px Ubuntu, "Noto Sans", sans-serif; color: #000; letter-spacing: -.13px; margin-top: -1px; }
.url span { color: #808080; }
.key { margin-left: auto; margin-right: 5px; }
.exts { flex: 1; display: flex; gap: 16px; align-items: center; margin-left: -3px; }
.ext { position: relative; font-family: "Liberation Sans", sans-serif; }
.ext i { position: absolute; font-style: normal; font-size: 10px; line-height: 11px; height: 11px; color: #fff; text-align: center; bottom: -6px; }
.dot-badge { left: 10px; width: 11px; background: #a3ccff; }
.min-badge { left: -4px; width: 24px; background: #f90504; }
.gl { font-weight: 700; font-size: 11.500px; color: #a6a6a6; }
.kebab { margin-left: auto; }

/* site */
.page { flex: 1; min-height: 0; position: relative; display: flex; flex-direction: column; background: #767676; }
.site-head { height: 60px; flex: none; display: flex; align-items: center; padding: 0 26px 0 17px; background: #7f7f7f; border-bottom: 1px solid #696a6d; }
.burger { width: 35px; display: grid; gap: 5px; padding-top: 5px; }
.burger i { height: 3px; border-radius: 1px; background: #5797fb; }
.logo { display: flex; align-items: flex-end; height: 46px; margin: -3px 0 0 29px; }
.logo span { margin: 0 0 -1px -7px; font: 700 13px/15px "Liberation Serif", serif; color: #000; letter-spacing: -.35px; white-space: nowrap; }
.user { margin-left: auto; display: flex; align-items: center; padding-top: 3px; }
.welcome { font-size: 16px; letter-spacing: .1px; color: #303030; margin-top: -2px; }
.user .bar { width: 1px; height: 34px; margin: 0 15px 0 14px; background: #1b1b30; }
.avatar { margin-right: 6px; }
.site-body { flex: 1; display: flex; min-height: 0; }
.side { width: 70px; flex: none; background: #1a212d; color: #6b6b6b; font-size: 12px; line-height: 14px; text-align: center; }
.side a { display: flex; flex-direction: column; align-items: center; }
.side a svg { margin-bottom: 3px; }
.working { padding-top: 10px; font-size: 12.500px; }
.all { padding-top: 23px; }
.fave { padding-top: 22px; }
.side .fave svg { margin-bottom: 1px; }
.content { flex: 1; display: flex; flex-direction: column; padding-bottom: 6px; }
.hivebar { height: 46px; flex: none; display: flex; align-items: center; padding: 2px 9px 0; background: #77797d; }
.hive-name { margin: 1px 0 0 10px; width: 250px; font-size: 15px; font-weight: 500; color: #262626; letter-spacing: .5px; }
.sep { width: 1px; background: #3e4146; height: 22px; }
.pin { margin-left: 20px; }
.heart { margin-left: 19px; }
.tools { margin-left: auto; display: flex; align-items: center; }
.select, .filter { height: 27px; display: flex; align-items: center; background: #294f86; color: #868d96; font-size: 13px; margin-top: -3px; }
.select { width: 160px; margin-left: 17px; padding: 0 6px 0 10px; justify-content: space-between; }
.filter { width: 120px; margin: -3px 15px 0 10px; padding: 0 3px 0 33px; justify-content: space-between; }
.plus { width: 40px; height: 40px; margin-left: 14px; border-radius: 50%; background: #204a86; display: grid; place-items: center; padding-top: 3px; }
.card { width: 1418px; height: 291px; flex: none; margin: 21px 0 0 22px; border-radius: 4px; background: #808080; }
.card-head { height: 41px; display: flex; align-items: center; padding: 0 16px 5px 10px; border-left: 5px solid #3b3b3b; border-radius: 3px 0 0; }
.card h2 { margin: 0; font-size: 17px; font-weight: 300; color: #35231e; letter-spacing: .07px; }
.card .sep { height: 18px; margin: 3px 16px 0 11px; background: #63666d; }
.card time { font-size: 11px; letter-spacing: .1px; color: #2f6634; padding-top: 4px; }
.card-tools { margin-left: auto; display: flex; align-items: center; gap: 7px; margin-top: -15px; }
.more { margin-left: 2px; }
.ylab text, .xlab text { font: 10px "Liberation Serif", serif; fill: #303030; text-anchor: end; }
.xlab text { text-anchor: middle; }
.axis { font: 700 11px "Open Sans", sans-serif; fill: #262626; text-anchor: middle; }
footer { height: 55px; flex: none; margin-top: auto; padding-left: 0; background: #676767; color: #333; font-size: 14.500px; letter-spacing: -.08px; line-height: 55px; text-align: center; }
.side-dot { position: absolute; right: 4px; top: 444px; width: 16px; height: 16px; border-radius: 50%; background: #073a80; }
.bot { position: absolute; left: 1241px; bottom: 0; width: 238px; }
.bot .head { position: relative; width: 140px; height: 32px; margin-left: 49px; padding: 18px 43px 0 42px; border-radius: 14px 14px 0 0; background: #1a2039; display: flex; justify-content: space-between; }
.bot .head i { width: 13px; height: 13px; border-radius: 50%; background: #165186; }
.bot .head b { position: absolute; right: 8px; top: -10px; width: 25px; height: 24px; border-radius: 50%; background: #7a1c1e; color: #8d8383; font-size: 12px; font-weight: 400; line-height: 24px; text-align: center; }
.torso { height: 15px; border-radius: 9px 9px 0 0; background: #1a2039; }

/* dialog */
.modal { position: absolute; left: 528px; top: 120px; width: 600px; height: 560px; background: #fafafa; box-shadow: 0 5px 15px rgba(0,0,0,.5); }
.modal-head { height: 59px; display: flex; align-items: center; padding: 0 15px 0 15px; background: #0d73f8; color: #fff; font-size: 16px; }
.modal-head span { margin-left: 2px; letter-spacing: .06px; }
.modal-head em { font-style: normal; color: #f39a1c; }
.dismiss { margin: -3px 0 0 auto; }
.modal ul { list-style: none; margin: 0; padding: 16px 15px; display: grid; gap: 5px; }
.modal li { height: 38px; display: flex; align-items: center; justify-content: space-between; padding: 0 16px 0 14px; border: 1px solid #5c98e3; border-radius: 2px; background: #f4f4f4; color: #111; font-size: 15px; letter-spacing: .06px; }
.modal li svg { width: 10px; height: 14px; margin-top: -1px; }
```
